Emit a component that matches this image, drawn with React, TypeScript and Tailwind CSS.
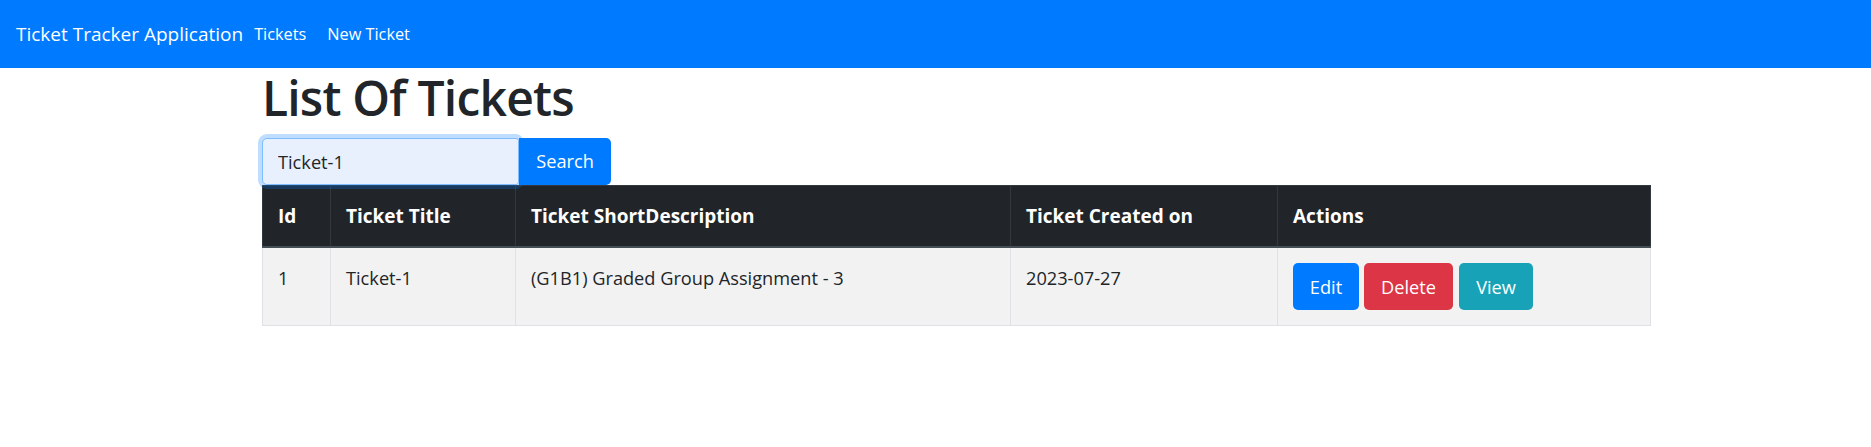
import * as React from "react";

interface Ticket {
  id: number;
  title: string;
  shortDescription: string;
  createdOn: string;
}

const tickets: Ticket[] = [
  { id: 1, title: "Ticket-1", shortDescription: "(G1B1) Graded Group Assignment - 3", createdOn: "2023-07-27" },
];

const Navbar: React.FC = () => (
  <nav className="h-[68px] bg-[#007bff] flex items-center pl-[16px] text-white">
    <span className="text-[19px] leading-[30px] mr-[11px]">Ticket Tracker Application</span>
    <a href="#" className="text-[16.3px] leading-[26px] text-white">Tickets</a>
    <a href="#" className="text-[16.3px] leading-[26px] text-white ml-[21px]">New Ticket</a>
  </nav>
);

const App: React.FC = () => {
  const [query, setQuery] = React.useState("Ticket-1");

  return (
    <div className="min-h-screen bg-white text-[#212529] font-['Open_Sans','Noto_Sans',sans-serif]">
      <Navbar />
      <main className="ml-[262px] w-[1388px]">
        <h1 className="text-[48px] leading-[60px] font-semibold tracking-[-0.8px] mb-[10px]">List Of Tickets</h1>
        <form className="flex" onSubmit={(e) => e.preventDefault()}>
          <input
            value={query}
            onChange={(e) => setQuery(e.target.value)}
            className="relative z-10 w-[257px] h-[47px] px-[15px] text-[18.2px] bg-[#e8f0fe] border border-[#80bdff] rounded-l-[5px] rounded-r-[3px] shadow-[0_0_0_4px_rgba(0,123,255,0.25)] outline-none"
          />
          <button type="submit" className="w-[92px] h-[47px] bg-[#007bff] text-white text-[18.2px] rounded-r-[5px]">
            Search
          </button>
        </form>
        <table className="w-[1388px] table-fixed border-collapse text-[18.2px] leading-[30px]">
          <thead>
            <tr className="bg-[#212529] text-white text-left text-[19px]">
              <th className="w-[68px] p-[15px] border border-[#32383e] border-b-2 border-b-[#454d55] font-bold">Id</th>
              <th className="w-[185px] p-[15px] border border-[#32383e] border-b-2 border-b-[#454d55] font-bold">Ticket Title</th>
              <th className="w-[495px] p-[15px] border border-[#32383e] border-b-2 border-b-[#454d55] font-bold">Ticket ShortDescription</th>
              <th className="w-[267px] p-[15px] border border-[#32383e] border-b-2 border-b-[#454d55] font-bold">Ticket Created on</th>
              <th className="w-[373px] p-[15px] border border-[#32383e] border-b-2 border-b-[#454d55] font-bold">Actions</th>
            </tr>
          </thead>
          <tbody>
            {tickets.map((t) => (
              <tr key={t.id} className="bg-[#f2f2f2]">
                <td className="p-[15px] border border-[#dee2e6] align-top">{t.id}</td>
                <td className="p-[15px] border border-[#dee2e6] align-top">{t.title}</td>
                <td className="p-[15px] border border-[#dee2e6] align-top">{t.shortDescription}</td>
                <td className="p-[15px] border border-[#dee2e6] align-top">{t.createdOn}</td>
                <td className="p-[15px] border border-[#dee2e6] align-top">
                  <div className="flex gap-[5px]">
                    <button className="w-[66px] h-[47px] rounded-[5px] bg-[#007bff] text-white">Edit</button>
                    <button className="w-[89px] h-[47px] rounded-[5px] bg-[#dc3545] text-white">Delete</button>
                    <button className="w-[74px] h-[47px] ml-[1px] rounded-[5px] bg-[#17a2b8] text-white">View</button>
                  </div>
                </td>
              </tr>
            ))}
          </tbody>
        </table>
      </main>
    </div>
  );
};

export default App;
